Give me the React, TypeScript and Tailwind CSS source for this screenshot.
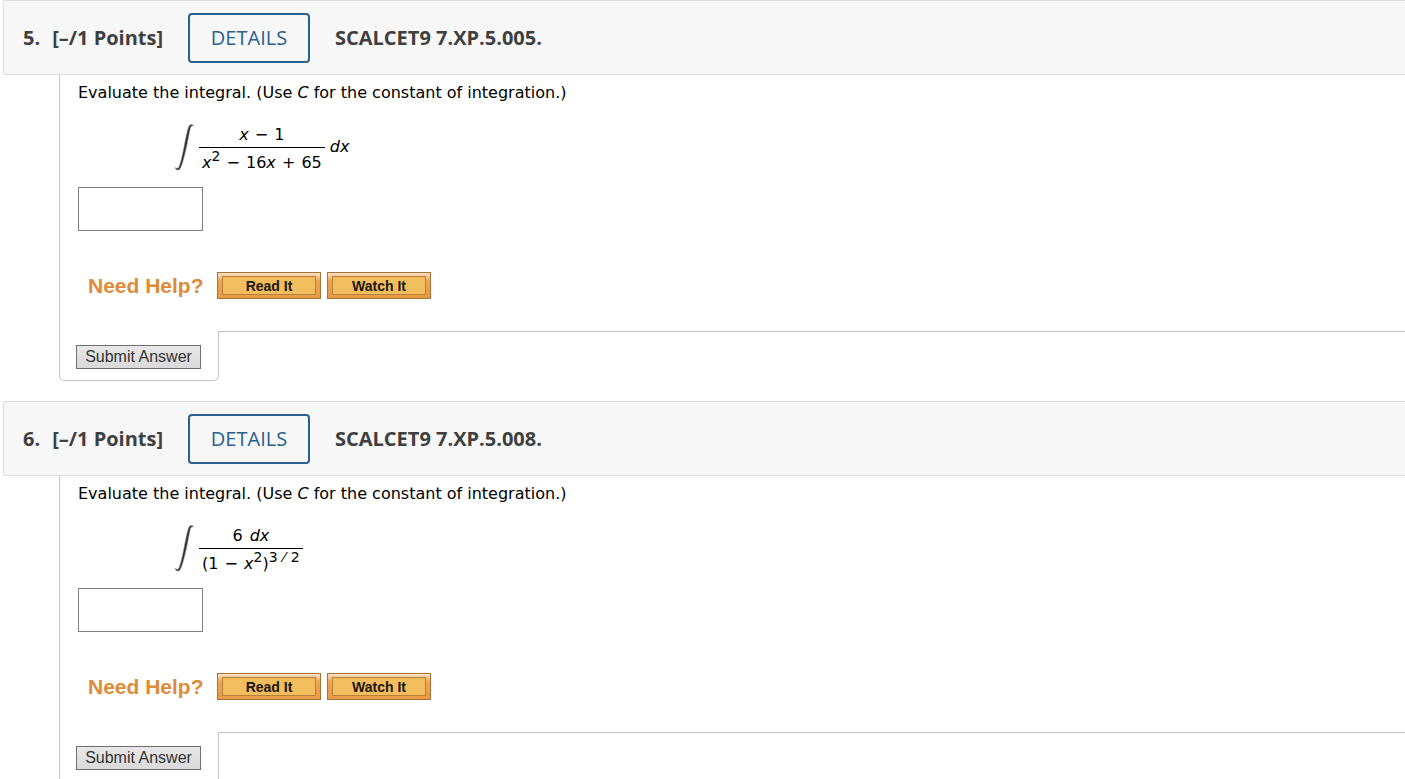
import type { ReactNode } from "react";

function IntegralSign() {
  return (
    <svg className="h-12 w-5 shrink-0" viewBox="0 0 20 48" aria-label="integral" role="img">
      <path
        d="M19.4 3C19 1.2 16.2 .8 14.8 3.6C13.4 7 12.2 13 10.6 21C9 29.5 7.2 38 5.2 43.4C4.4 45.6 2.8 45.6 1.2 44.6C1.6 47.4 4.8 48 6.4 45.2C8.6 40.6 10.6 32.5 12.6 23.5C14 16.8 15.2 9.6 16.4 4.8C17 2.8 18.4 2.4 19.4 3Z"
        fill="#333"
        stroke="#888"
        strokeWidth="0.5"
      />
    </svg>
  );
}

function Fraction({ top, bottom }: { top: ReactNode; bottom: ReactNode }) {
  return (
    <span className="flex flex-col text-center leading-5">
      <span className="border-b border-black px-[3px] pt-[3px] pb-0.5">{top}</span>
      <span className="px-[3px] pt-[5px] whitespace-nowrap">{bottom}</span>
    </span>
  );
}

function Power({ children }: { children: ReactNode }) {
  return <sup className="text-sm leading-none">{children}</sup>;
}

function Operator({ children }: { children: ReactNode }) {
  return <span className="mx-px"> {children} </span>;
}

function HelpButton({ children }: { children: ReactNode }) {
  return (
    <button
      type="button"
      className="h-[27px] w-[104px] border border-[#a87238] bg-linear-to-b from-[#fbe3c6] via-[#eda550] via-30% to-[#e99a45] px-1 py-[3px]"
    >
      <span className="flex h-full items-center justify-center border border-[#b5803c] bg-[#f2bd5c] pt-px font-['Liberation_Sans',sans-serif] text-sm leading-none font-bold text-[#1c1608]">
        {children}
      </span>
    </button>
  );
}

function Question({
  number,
  code,
  formula,
}: {
  number: number;
  code: string;
  formula: ReactNode;
}) {
  const answerId = `answer-${number}`;
  return (
    <section className="mb-5 font-['DejaVu_Sans',sans-serif] text-base text-black">
      <header className="ml-[3px] flex h-[75px] items-center rounded-l-xs border border-r-0 border-[#ddd] bg-[#f7f7f7] pl-[19px] font-['Open_Sans',sans-serif] text-xl font-bold text-[#3f3f3f]">
        <h2 className="flex w-[165px] gap-3 whitespace-nowrap">
          <span>{number}.</span>
          <span>[–/1 Points]</span>
        </h2>
        <button
          type="button"
          className="h-[50px] w-[122px] rounded-[4px] border-2 border-[#29608f] bg-[#f7f7f7] font-medium text-[#29608f]"
        >
          DETAILS
        </button>
        <span className="ml-[25px]">{code}</span>
      </header>

      <div className="ml-[59px] border-l border-[#c4c4c4] pl-[18px]">
        <div className="flex h-[256px] flex-col items-start pt-[5px]">
          <label htmlFor={answerId} className="leading-[26px]">
            Evaluate the integral. (Use <em>C</em> for the constant of integration.)
          </label>
          <div className="mt-[17px] ml-24 flex h-12 items-center">
            {formula}
          </div>
          <input
            id={answerId}
            type="text"
            className="mt-4 h-11 w-[125px] border border-[#808080] bg-white px-2 outline-none"
          />
          <div className="mt-[41px] ml-[10px] flex items-center font-['Liberation_Sans',sans-serif]">
            <span className="w-[129px] text-[21px] leading-none font-bold text-[#e08a35]">
              Need Help?
            </span>
            <span className="flex gap-1.5">
              <HelpButton>Read It</HelpButton>
              <HelpButton>Watch It</HelpButton>
            </span>
          </div>
        </div>
      </div>

      <div className="ml-[59px] flex h-[50px]">
        <div className="w-40 rounded-b-[5px] border border-t-0 border-[#c4c4c4] pt-[14px] pl-4">
          <button
            type="button"
            className="block h-6 w-[125px] border border-[#6e6e6e] bg-linear-to-b from-[#e8e8e8] to-[#d9d9d9] font-['Liberation_Sans',sans-serif] text-base leading-none whitespace-nowrap text-[#333]"
          >
            Submit Answer
          </button>
        </div>
        <div className="flex-1 border-t border-[#c4c4c4]" />
      </div>
    </section>
  );
}

export default function App() {
  return (
    <main className="max-h-screen overflow-hidden bg-white">
      <Question
        number={5}
        code="SCALCET9 7.XP.5.005."
        formula={
          <span className="flex items-center gap-[5px]">
            <IntegralSign />
            <Fraction
              top={<><em>x</em><Operator>−</Operator>1</>}
              bottom={<><em>x</em><Power>2</Power><Operator>−</Operator>16<em>x</em><Operator>+</Operator>65</>}
            />
            <em>dx</em>
          </span>
        }
      />
      <Question
        number={6}
        code="SCALCET9 7.XP.5.008."
        formula={
          <span className="flex items-center gap-[5px]">
            <IntegralSign />
            <Fraction
              top={<>6<Operator>{" "}</Operator><em>dx</em></>}
              bottom={<>(1<Operator>−</Operator><em>x</em><Power>2</Power>)<Power>3<Operator>⁄</Operator>2</Power></>}
            />
          </span>
        }
      />
    </main>
  );
}
